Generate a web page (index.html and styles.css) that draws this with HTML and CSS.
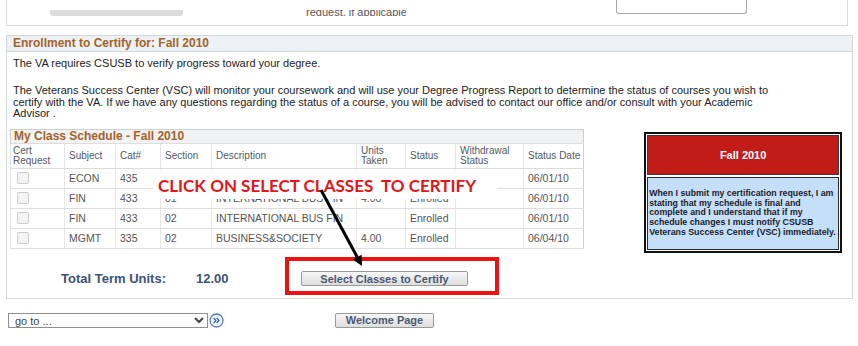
FILE: index.html
```html
<!DOCTYPE html>
<html>
<head>
    <title>Enrollment to Certify</title>
    <link rel="stylesheet" href="styles.css">
</head>
<body>
    <div class="prev-panel">
        <span class="old-btn"></span>
        <span class="prev-clip"><span>request, if applicable.</span></span>
        <span class="old-btn2"></span>
    </div>

    <div class="section">
        <div class="section-head">Enrollment to Certify for: Fall 2010</div>
        <p class="intro">The VA requires CSUSB to verify progress toward your degree.</p>
        <p class="intro intro-2">The Veterans Success Center (VSC) will monitor your coursework and will use your Degree Progress Report to determine the status of courses you wish to<br>
            certify with the VA. If we have any questions regarding the status of a course, you will be advised to contact our office and/or consult with your Academic<br>
            Advisor .</p>

        <div class="cert-row">
            <div class="cert-left">
                <table class="sched">
                    <colgroup>
                        <col class="c-cert">
                        <col class="c-subj">
                        <col class="c-cat">
                        <col class="c-sect">
                        <col class="c-desc">
                        <col class="c-units">
                        <col class="c-stat">
                        <col class="c-wd">
                        <col class="c-date">
                    </colgroup>
                    <tr>
                        <th colspan="9" class="sched-title">My Class Schedule - Fall 2010</th>
                    </tr>
                    <tr class="col-head">
                        <th class="cert-head">Cert<br>Request</th>
                        <th>Subject</th>
                        <th>Cat#</th>
                        <th>Section</th>
                        <th>Description</th>
                        <th>Units<br>Taken</th>
                        <th>Status</th>
                        <th>Withdrawal<br>Status</th>
                        <th>Status Date</th>
                    </tr>
                    <tr>
                        <td><span class="chk"></span></td>
                        <td>ECON</td>
                        <td>435</td>
                        <td>01</td>
                        <td>ECON OF ORGANIZATIONS</td>
                        <td>4.00</td>
                        <td>Enrolled</td>
                        <td></td>
                        <td>06/01/10</td>
                    </tr>
                    <tr>
                        <td><span class="chk"></span></td>
                        <td>FIN</td>
                        <td>433</td>
                        <td>01</td>
                        <td>INTERNATIONAL BUS FIN</td>
                        <td>4.00</td>
                        <td>Enrolled</td>
                        <td></td>
                        <td>06/01/10</td>
                    </tr>
                    <tr>
                        <td><span class="chk"></span></td>
                        <td>FIN</td>
                        <td>433</td>
                        <td>02</td>
                        <td>INTERNATIONAL BUS FIN</td>
                        <td></td>
                        <td>Enrolled</td>
                        <td></td>
                        <td>06/01/10</td>
                    </tr>
                    <tr>
                        <td><span class="chk"></span></td>
                        <td>MGMT</td>
                        <td>335</td>
                        <td>02</td>
                        <td>BUSINESS&amp;SOCIETY</td>
                        <td>4.00</td>
                        <td>Enrolled</td>
                        <td></td>
                        <td>06/04/10</td>
                    </tr>
                </table>

                <div class="totals">
                    <span class="total-label">Total Term Units:</span>
                    <span class="total-val">12.00</span>
                    <span class="btn-wrap">
                        <button class="ps-btn wide">Select Classes to Certify</button>
                        <span class="callout"></span>
                    </span>
                </div>
            </div>

            <div class="notice">
                <div class="notice-title">Fall 2010</div>
                <div class="notice-body">When I submit my certification request, I am<br>
                    stating that my schedule is final and<br>
                    complete and I understand that if my<br>
                    schedule changes I must notify CSUSB<br>
                    Veterans Success Center (VSC) immediately.</div>
            </div>
        </div>
    </div>

    <div class="footer">
        <select class="goto">
            <option>go to ...</option>
        </select>
        <svg class="go-icon" width="15" height="15" viewBox="0 0 15 15">
            <circle cx="7.5" cy="7.5" r="6.5" fill="#eef4fb" stroke="#4f7fc0" stroke-width="1.3"/>
            <path d="M4.6 4.8 L7 7.5 L4.6 10.2 M7.6 4.8 L10 7.5 L7.6 10.2" fill="none" stroke="#2f5ea8" stroke-width="1.2"/>
        </svg>
        <button class="ps-btn welcome">Welcome Page</button>
    </div>

    <!-- annotation drawn over the screenshot -->
    <div class="click-note">CLICK ON SELECT CLASSES&nbsp; TO CERTIFY</div>
    <svg class="arrow" width="55" height="85" viewBox="0 0 55 85">
        <line x1="6" y1="5" x2="42.3" y2="72.2" stroke="#000" stroke-width="3"/>
        <polygon points="47,81 37.8,74.6 46.6,69.8" fill="#000"/>
    </svg>
</body>
</html>
```

FILE: styles.css
```css
body {
    margin: 0;
    font-family: "Liberation Sans", Arial, sans-serif;
    font-size: 11px;
    color: #222;
    background-color: #fff;
}

/* bottom of the panel above, cut off by the screenshot */
.prev-panel {
    display: flex;
    align-items: flex-start;
    height: 26px;
    margin: 0 10px 0 6px;
    border: 1px solid #dadada;
    border-top: none;
    box-sizing: border-box;
}

.old-btn {
    width: 133px;
    height: 6px;
    margin: 10px 0 0 43px;
    background-color: #dcdcdc;
    border-radius: 0 0 3px 3px;
}

.prev-clip {
    display: block;
    width: 100px;
    height: 6px;
    margin: 10px 0 0 123px;
    overflow: hidden;
    color: #555;
    white-space: nowrap;
}

.prev-clip span {
    display: block;
    margin-top: -4px;
    line-height: 12px;
}

.old-btn2 {
    width: 131px;
    height: 14px;
    margin-left: 210px;
    border: 1px solid #a8a8a8;
    border-top: none;
    border-radius: 0 0 3px 3px;
    box-sizing: border-box;
}

.section {
    margin: 9px 5px 0 6px;
    border: 1px solid #d3d8dd;
}

.section-head {
    height: 15px;
    padding-left: 6px;
    line-height: 15px;
    font-size: 12px;
    font-weight: bold;
    color: #a4622b;
    background-color: #eef1f4;
    border-bottom: 1px solid #d3d8dd;
}

.intro {
    margin: 5px 0 0;
    padding-left: 6px;
    line-height: 12px;
    color: #222;
}

.intro-2 {
    margin-top: 16px;
    line-height: 11.6px;
}

.cert-row {
    display: flex;
    align-items: flex-start;
    margin-top: 9px;
    padding-left: 3px;
}

.sched {
    width: 573px;
    border-collapse: collapse;
    border: 1px solid #cfcfcf;
    table-layout: fixed;
    font-size: 10.5px;
}

.c-cert { width: 54px; }
.c-subj { width: 51px; }
.c-cat { width: 45px; }
.c-sect { width: 51px; }
.c-desc { width: 145px; }
.c-units { width: 49px; }
.c-stat { width: 50px; }
.c-wd { width: 68px; }
.c-date { width: 60px; }

.sched th,
.sched td {
    padding: 0 0 0 4px;
    text-align: left;
    font-weight: normal;
    white-space: nowrap;
    overflow: hidden;
}

.sched .sched-title {
    height: 13px;
    padding-left: 3px;
    line-height: 13px;
    font-size: 12px;
    font-weight: bold;
    color: #a4622b;
    background-color: #f1f2f3;
    border-bottom: 1px solid #dedede;
}

.col-head th {
    height: 24px;
    line-height: 9.5px;
    font-size: 10px;
    color: #4f5a66;
    border-left: 1px solid #e3e3e3;
    border-bottom: 1px solid #dcdcdc;
}

.col-head .cert-head {
    padding-left: 2px;
}

.sched td {
    height: 19px;
    color: #555;
    border-left: 1px solid #e6e6e6;
    border-bottom: 1px solid #dedede;
}

.chk {
    display: block;
    width: 10px;
    height: 10px;
    margin-left: 2px;
    border: 1px solid #cbcbcb;
    border-radius: 2px;
    background-color: #f4f4f4;
}

.totals {
    display: flex;
    align-items: center;
    height: 18px;
    margin: 21px 0 10px;
    padding-left: 51px;
    font-size: 13px;
    font-weight: bold;
    color: #3b5378;
}

.total-label {
    width: 135px;
}

.total-val {
    width: 105px;
}

.btn-wrap {
    position: relative;
    display: block;
}

.ps-btn {
    display: block;
    height: 15px;
    padding: 0;
    font-family: "Liberation Sans", Arial, sans-serif;
    font-size: 11px;
    font-weight: bold;
    color: #4b5975;
    background: linear-gradient(#f7f7f7, #dedede);
    border: 1px solid #9a9a9a;
    border-radius: 2px;
}

.ps-btn.wide {
    width: 167px;
}

.callout {
    position: absolute;
    top: -14px;
    left: -16px;
    right: -31px;
    bottom: -9px;
    border: 4px solid #ee1111;
}

.notice {
    width: 198px;
    margin: 3px 0 0 60px;
    padding: 1px;
    border: 2px solid #111;
    box-sizing: border-box;
}

.notice-title {
    height: 38px;
    line-height: 38px;
    text-align: center;
    font-size: 11px;
    font-weight: bold;
    color: #fff;
    background-color: #c11c18;
    border: 1px solid #3a3a3a;
}

.notice-body {
    display: flex;
    align-items: center;
    height: 71px;
    margin-top: 2px;
    padding-left: 1px;
    font-size: 8.8px;
    font-weight: bold;
    line-height: 9.8px;
    color: #1c1c28;
    white-space: nowrap;
    background-color: #c6dff9;
    border: 1px solid #2a2a2a;
}

.footer {
    display: flex;
    align-items: center;
    margin-top: 14px;
    padding-left: 8px;
}

.goto {
    width: 200px;
    height: 15px;
    padding: 0 0 0 2px;
    font-family: "Liberation Sans", Arial, sans-serif;
    font-size: 11px;
    color: #444;
    border: 1px solid #8f8f8f;
    border-radius: 0;
    background-color: #fff;
}

.go-icon {
    margin-left: 1px;
}

.ps-btn.welcome {
    width: 99px;
    margin-left: 111px;
}

.click-note {
    position: absolute;
    top: 170px;
    left: 153px;
    width: 339px;
    height: 29px;
    padding-left: 5px;
    line-height: 31px;
    font-family: Lato, "Open Sans", sans-serif;
    font-size: 17px;
    font-weight: bold;
    color: #e3141a;
    background-color: #fff;
}

.arrow {
    position: absolute;
    top: 185px;
    left: 315px;
}
```
